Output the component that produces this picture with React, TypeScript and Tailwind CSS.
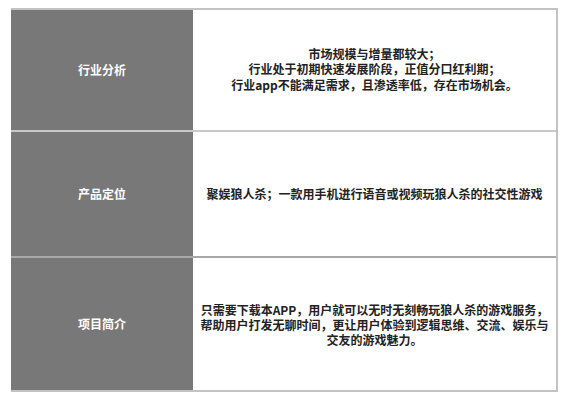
import React from "react";

const font = { fontFamily: '"Noto Sans CJK SC", "Noto Sans", sans-serif' };

export default function App() {
  return (
    <div className="w-[563px] h-[400px] bg-white pl-[11px] pt-[8px]" style={font}>
      <div className="w-[547px] border-t-2 border-r-2 border-b-2 border-[#c2c2c2] flex flex-col">
        <div className="flex h-[122px] border-b-2 border-[#c8c8c8]">
          <div className="w-[182px] bg-[#787878] flex items-center justify-center text-white text-[12px] font-bold">
            行业分析
          </div>
          <div className="flex-1 flex items-center justify-center text-center text-[12px] font-bold text-[#222] leading-[15.5px] pb-[2px]">
            <div>
              市场规模与增量都较大；
              <br />
              行业处于初期快速发展阶段，正值分口红利期；
              <br />
              行业app不能满足需求，且渗透率低，存在市场机会。
            </div>
          </div>
        </div>
        <div className="flex h-[126px] border-b-2 border-[#a8a8a8]">
          <div className="w-[182px] bg-[#787878] flex items-center justify-center text-white text-[12px] font-bold">
            产品定位
          </div>
          <div className="flex-1 flex items-center justify-center text-center text-[12px] font-bold text-[#222]">
            聚娱狼人杀；一款用手机进行语音或视频玩狼人杀的社交性游戏
          </div>
        </div>
        <div className="flex h-[132px]">
          <div className="w-[182px] bg-[#787878] flex items-center justify-center text-white text-[12px] font-bold">
            项目简介
          </div>
          <div className="flex-1 flex items-center justify-center text-center text-[12px] font-bold text-[#222] leading-[15px] px-[5px]">
            只需要下载本APP，用户就可以无时无刻畅玩狼人杀的游戏服务，帮助用户打发无聊时间，更让用户体验到逻辑思维、交流、娱乐与交友的游戏魅力。
          </div>
        </div>
      </div>
    </div>
  );
}
